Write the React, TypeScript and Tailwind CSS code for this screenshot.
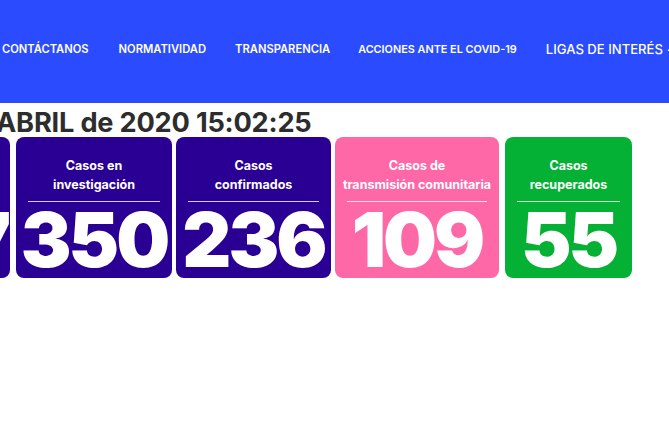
import React from "react";

const cards = [
  { l1: "Casos", l2: "totales", n: "1007", bg: "bg-[#290093]", w: "w-[156px]", extra: "-ml-[146px]", num: "self-end pr-[2px]" },
  { l1: "Casos en", l2: "investigación", n: "350", bg: "bg-[#290093]", w: "w-[156px]", extra: "ml-[6px]", num: "" },
  { l1: "Casos", l2: "confirmados", n: "236", bg: "bg-[#290093]", w: "w-[155px]", extra: "ml-[4px]", num: "" },
  { l1: "Casos de", l2: "transmisión comunitaria", n: "109", bg: "bg-[#fe68a7]", w: "w-[164px]", extra: "ml-[4px]", num: "" },
  { l1: "Casos", l2: "recuperados", n: "55", bg: "bg-[#04b134]", w: "w-[127px]", extra: "ml-[6px]", num: "" },
];

export default function App() {
  return (
    <div className="w-[669px] h-[442px] overflow-hidden bg-white" style={{ fontFamily: "Inter, 'Open Sans', sans-serif" }}>
      <header className="h-[103px] bg-[#2a4cfe] flex items-center pb-[4px]">
        <nav className="flex items-center whitespace-nowrap text-white font-semibold">
          <span className="ml-[2px] text-[11.2px]">CONTÁCTANOS</span>
          <span className="ml-[30px] text-[11.2px]">NORMATIVIDAD</span>
          <span className="ml-[29px] text-[11.2px]">TRANSPARENCIA</span>
          <span className="ml-[28px] text-[10.85px]">ACCIONES ANTE EL COVID-19</span>
          <span className="ml-[29px] text-[13.1px] font-medium">LIGAS DE INTERÉS</span>
          <span className="ml-[4px] text-[13px]">-</span>
        </nav>
      </header>
      <h1 className="-ml-[4px] mt-[6px] h-[28px] leading-[28px] text-[27.2px] font-bold text-[#2d2d2d] whitespace-nowrap tracking-[-0.2px]">
        ABRIL de 2020 15:02:25
      </h1>
      <div className="flex whitespace-nowrap">
        {cards.map((c, i) => (
          <div
            key={i}
            className={`${c.bg} ${c.w} ${c.extra} shrink-0 h-[141px] rounded-[8px] flex flex-col items-center text-white pt-[19px]`}
          >
            <div className="text-[12.5px] font-bold leading-[19px] text-center">{c.l1}</div>
            <div className="text-[12.5px] font-bold leading-[19px] text-center">{c.l2}</div>
            <div className="mt-[7px] h-px w-[calc(100%-24px)] bg-white/80" />
            <div className={`${c.num} text-[76px] font-black leading-[74px] tracking-[-3px] text-center`}>{c.n}</div>
          </div>
        ))}
      </div>
    </div>
  );
}
